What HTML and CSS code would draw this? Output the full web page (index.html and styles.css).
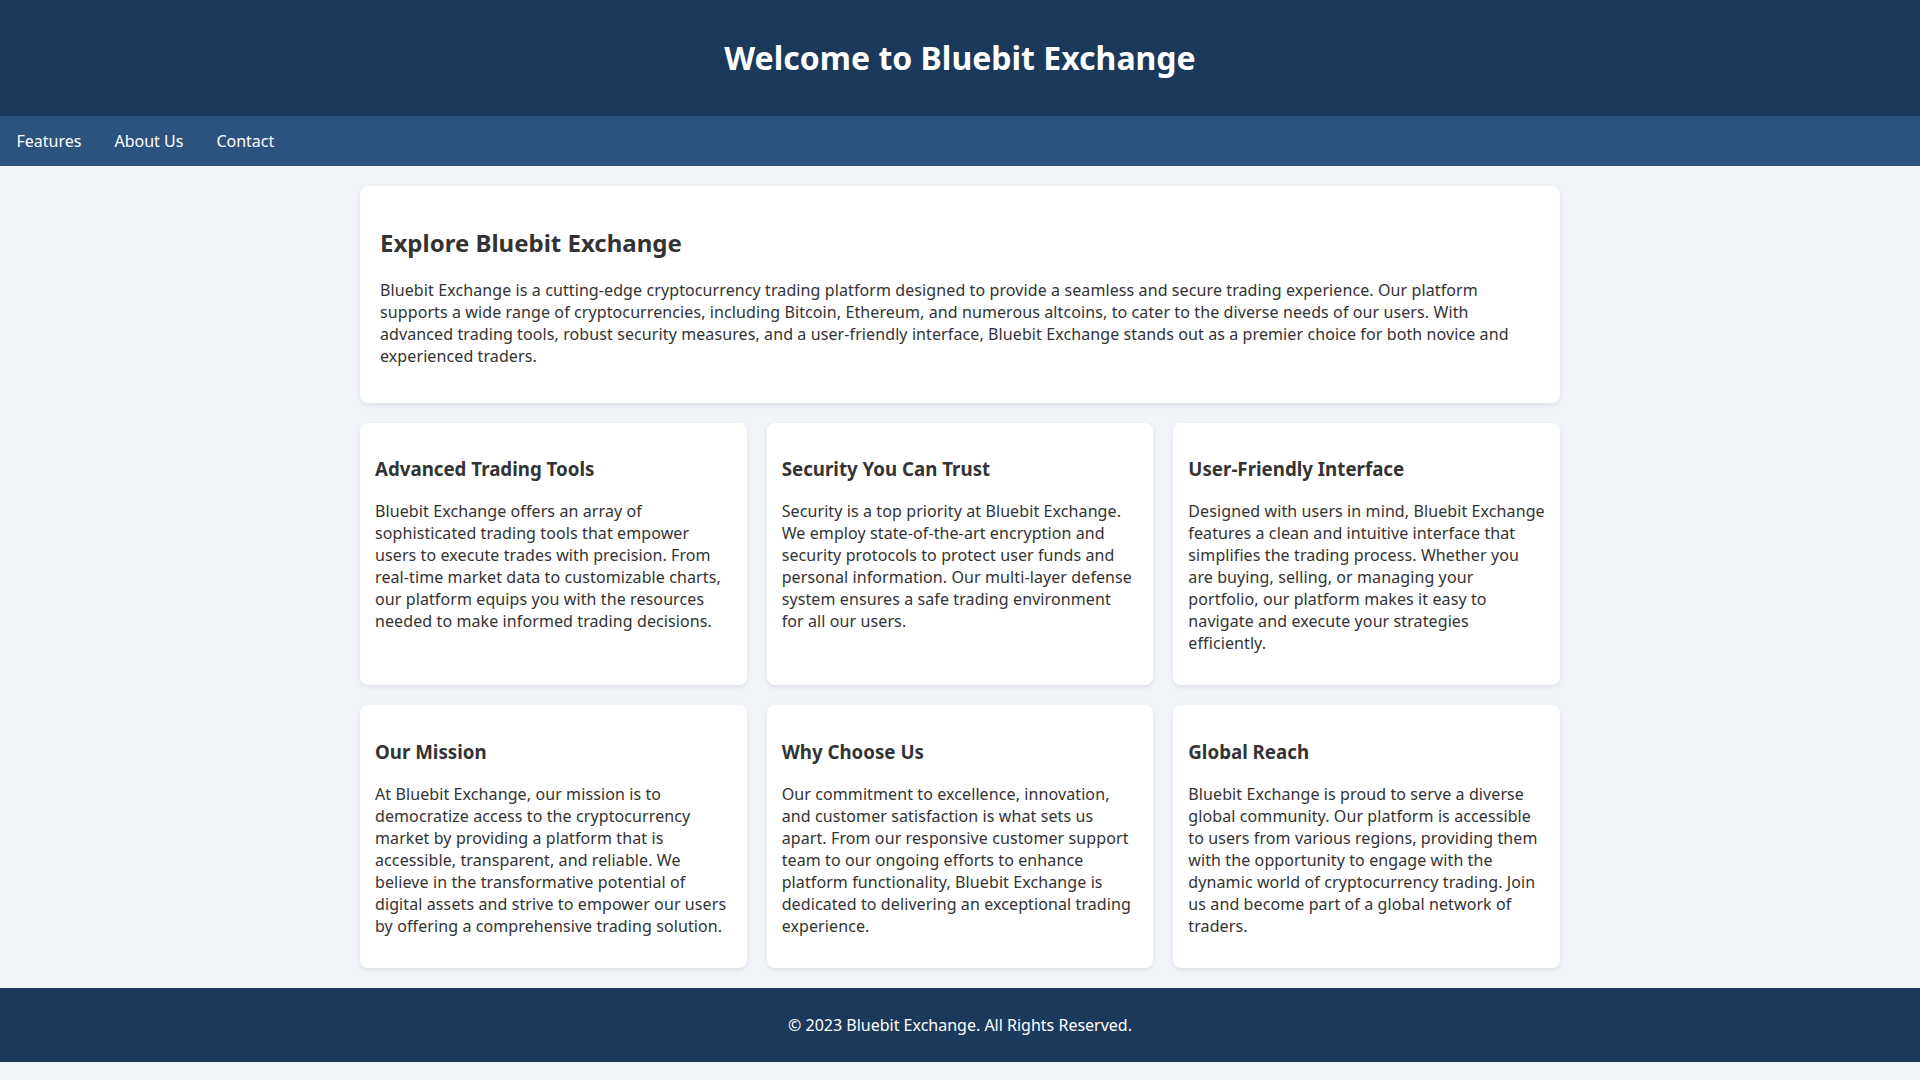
FILE: index.html
```html
<!DOCTYPE html>
<html lang="en">
<head>
<meta charset="UTF-8">
<title>Bluebit Exchange</title>
<link rel="stylesheet" href="styles.css">
</head>
<body>
<header class="site-header">
  <h1>Welcome to Bluebit Exchange</h1>
</header>
<nav class="site-nav">
  <a href="#">Features</a>
  <a href="#">About Us</a>
  <a href="#">Contact</a>
</nav>
<main class="container">
  <section class="card intro">
    <h2>Explore Bluebit Exchange</h2>
    <p>Bluebit Exchange is a cutting-edge cryptocurrency trading platform designed to provide a seamless and secure trading experience. Our platform supports a wide range of cryptocurrencies, including Bitcoin, Ethereum, and numerous altcoins, to cater to the diverse needs of our users. With advanced trading tools, robust security measures, and a user-friendly interface, Bluebit Exchange stands out as a premier choice for both novice and experienced traders.</p>
  </section>
  <div class="grid">
    <section class="card">
      <h3>Advanced Trading Tools</h3>
      <p>Bluebit Exchange offers an array of sophisticated trading tools that empower users to execute trades with precision. From real-time market data to customizable charts, our platform equips you with the resources needed to make informed trading decisions.</p>
    </section>
    <section class="card">
      <h3>Security You Can Trust</h3>
      <p>Security is a top priority at Bluebit Exchange. We employ state-of-the-art encryption and security protocols to protect user funds and personal information. Our multi-layer defense system ensures a safe trading environment<br>for all our users.</p>
    </section>
    <section class="card">
      <h3>User-Friendly Interface</h3>
      <p>Designed with users in mind, Bluebit Exchange features a clean and intuitive interface that simplifies the trading process. Whether you are buying, selling, or managing your portfolio, our platform makes it easy to navigate and execute your strategies efficiently.</p>
    </section>
    <section class="card">
      <h3>Our Mission</h3>
      <p>At Bluebit Exchange, our mission is to democratize access to the cryptocurrency market by providing a platform that is accessible, transparent, and reliable. We believe in the transformative potential of digital assets and strive to empower our users by offering a comprehensive trading solution.</p>
    </section>
    <section class="card">
      <h3>Why Choose Us</h3>
      <p>Our commitment to excellence, innovation, and customer satisfaction is what sets us apart. From our responsive customer support team to our ongoing efforts to enhance platform functionality, Bluebit Exchange is dedicated to delivering an exceptional trading experience.</p>
    </section>
    <section class="card">
      <h3>Global Reach</h3>
      <p>Bluebit Exchange is proud to serve a diverse global community. Our platform is accessible to users from various regions, providing them with the opportunity to engage with the dynamic world of cryptocurrency trading. Join us and become part of a global network of traders.</p>
    </section>
  </div>
</main>
<footer class="site-footer">
  <p>&copy; 2023 Bluebit Exchange. All Rights Reserved.</p>
</footer>
</body>
</html>
```

FILE: styles.css
```css
html, body {
  margin: 0;
  padding: 0;
}
body {
  font-family: "Noto Sans", "Open Sans", sans-serif;
  font-size: 16px;
  background: #f0f4f8;
  color: #333;
}
.site-header {
  background: #1b3a5b;
  color: #fff;
  text-align: center;
  padding: 15px 0;
}
.site-header h1 {
  margin: 0.67em 0;
  font-size: 32px;
  font-weight: 700;
}
.site-nav {
  background: #2c527e;
  display: flex;
}
.site-nav a {
  color: #fff;
  text-decoration: none;
  padding: 14px 16.5px;
}
.container {
  width: 1200px;
  margin: 20px auto;
}
.card {
  background: #fff;
  border-radius: 8px;
  box-shadow: 0 2px 5px rgba(0, 0, 0, 0.08);
  padding: 15px;
}
.card.intro {
  padding: 20px;
  margin-bottom: 20px;
}
.card h2 {
  font-size: 24px;
  margin: 0.83em 0;
}
.card h3 {
  font-size: 18.72px;
  margin: 1em 0;
}
.card p {
  margin: 1em 0;
  letter-spacing: 0.1px;
}
.grid {
  display: grid;
  grid-template-columns: repeat(3, 1fr);
  gap: 20px;
}
.site-footer {
  background: #1b3a5b;
  color: #fff;
  text-align: center;
  padding: 10px 0;
}
.site-footer p {
  margin: 1em 0;
}
```
